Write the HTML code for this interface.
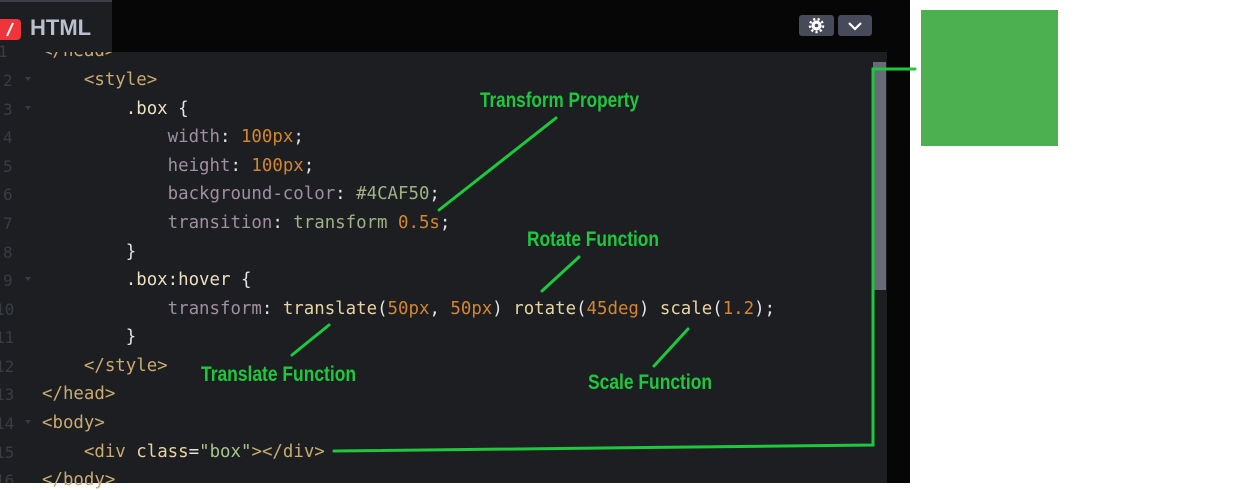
<!DOCTYPE html>
<html><head><style>
body{margin:0;width:1236px;height:483px;overflow:hidden;background:#fff;position:relative;font-family:"DejaVu Sans Mono",monospace}
.ed{position:absolute;left:0;top:0;width:887px;height:483px;background:#1d1e22;overflow:hidden}
.strip{position:absolute;left:887px;top:0;width:23px;height:483px;background:#060606}
.hdr{position:absolute;left:0;top:0;width:887px;height:52px;background:#060606}
.tab{position:absolute;left:0;top:0;width:112px;height:52px;background:#1d1e22;border-top:2px solid #3a3d45;box-sizing:border-box}
.logo{position:absolute;left:0;top:17px;width:21px;height:21px;background:#f0343c;border-radius:0 4px 4px 0}
.tabt{position:absolute;left:30px;top:13px;font:bold 22px "Liberation Sans",sans-serif;color:#b8c0cf}
.btn{position:absolute;top:15px;height:21px;background:#474a58;border-radius:3px}
.c{position:absolute;left:42px;font-size:17.4px;white-space:pre;color:#e3e3e3;line-height:20px}
.t{color:#c9ab70}.p{color:#a08fa3}.n{color:#d4862e}.h{color:#9fb286}.s{color:#a8c48c}.f{color:#e8d4a0}.sel{color:#ebe0c0}
.sb{position:absolute;left:873px;top:62px;width:13px;height:228px;background:#676b78}
.box{position:absolute;left:921px;top:10px;width:137px;height:136px;background:#4caf50}
</style></head><body>
<div class="ed">
<div class="hdr"></div>
<div class="tab"><div class="logo"></div><svg style="position:absolute;left:4px;top:20px" width="12" height="15"><line x1="9" y1="1" x2="3" y2="14" stroke="#ffffff" stroke-width="2"/></svg><div class="tabt">HTML</div></div>
<div class="btn" style="left:799px;width:35px"><svg width="35" height="21"><circle cx="17.5" cy="10.5" r="5" fill="#fff"/><circle cx="17.5" cy="10.5" r="6.5" fill="none" stroke="#fff" stroke-width="2.5" stroke-dasharray="2.2 2.3"/><circle cx="17.5" cy="10.5" r="1.8" fill="#474a58"/></svg></div>
<div class="btn" style="left:838px;width:34px"><svg width="34" height="21"><polyline points="11,8 17,14 23,8" fill="none" stroke="#fff" stroke-width="2.2"/></svg></div>
</div>
<div class="strip"></div>
<div class="sb"></div>
<div class="box"></div>
<div class="c" style="top:41px;clip-path:inset(11px 0 0 0)"><span class="t">&lt;/head&gt;</span></div>
<div class="c" style="top:70px">    <span class="t">&lt;style&gt;</span></div>
<div class="c" style="top:99px">        <span class="sel">.box</span> {</div>
<div class="c" style="top:127px">            <span class="p">width</span>: <span class="n">100px</span>;</div>
<div class="c" style="top:156px">            <span class="p">height</span>: <span class="n">100px</span>;</div>
<div class="c" style="top:184px">            <span class="p">background-color</span>: <span class="h">#4CAF50</span>;</div>
<div class="c" style="top:213px">            <span class="p">transition</span>: <span class="h">transform</span> <span class="n">0.5s</span>;</div>
<div class="c" style="top:242px">        }</div>
<div class="c" style="top:270px">        <span class="sel">.box:hover</span> {</div>
<div class="c" style="top:299px">            <span class="p">transform</span>: <span class="f">translate</span>(<span class="n">50px</span>, <span class="n">50px</span>) <span class="f">rotate</span>(<span class="n">45deg</span>) <span class="f">scale</span>(<span class="n">1.2</span>);</div>
<div class="c" style="top:327px">        }</div>
<div class="c" style="top:356px">    <span class="t">&lt;/style&gt;</span></div>
<div class="c" style="top:384px"><span class="t">&lt;/head&gt;</span></div>
<div class="c" style="top:413px"><span class="t">&lt;body&gt;</span></div>
<div class="c" style="top:442px">    <span class="t">&lt;div</span> <span class="f">class</span>=<span class="s">"box"</span><span class="t">&gt;&lt;/div&gt;</span></div>
<div class="c" style="top:470px"><span class="t">&lt;/body&gt;</span></div>
<svg style="position:absolute;left:0;top:0" width="1236" height="483" font-family="DejaVu Sans Mono" font-size="16" fill="#3a3c43">
<text x="-2" y="57">1</text><text x="3" y="86">2</text><text x="3" y="115">3</text><text x="3" y="143">4</text><text x="3" y="172">5</text><text x="3" y="200">6</text><text x="3" y="229">7</text><text x="3" y="258">8</text><text x="3" y="286">9</text><text x="-5" y="315">10</text><text x="-5" y="343">11</text><text x="-5" y="372">12</text><text x="-5" y="400">13</text><text x="-5" y="429">14</text><text x="-5" y="458">15</text><text x="-5" y="486">16</text>
<g fill="#3a3c43"><path d="M25 77l6 0-3 4z"/><path d="M25 106l6 0-3 4z"/><path d="M25 277l6 0-3 4z"/><path d="M25 420l6 0-3 4z"/></g>
<g stroke="#1ec83c" stroke-width="3" fill="none" stroke-linecap="round">
<line x1="439" y1="210" x2="556" y2="118"/>
<line x1="542" y1="291" x2="579" y2="257"/>
<line x1="292" y1="355" x2="329" y2="325"/>
<line x1="654" y1="366" x2="688" y2="329"/>
<polyline points="334,451 873,445 873,69 915,69"/>
</g>
<g fill="#1ec83c" font-family="Liberation Sans" font-weight="bold" font-size="21">
<text x="480" y="107" textLength="159" lengthAdjust="spacingAndGlyphs">Transform Property</text>
<text x="527" y="246" textLength="132" lengthAdjust="spacingAndGlyphs">Rotate Function</text>
<text x="201" y="381" textLength="155" lengthAdjust="spacingAndGlyphs">Translate Function</text>
<text x="588" y="389" textLength="124" lengthAdjust="spacingAndGlyphs">Scale Function</text>
</g>
</svg>
</body></html>
